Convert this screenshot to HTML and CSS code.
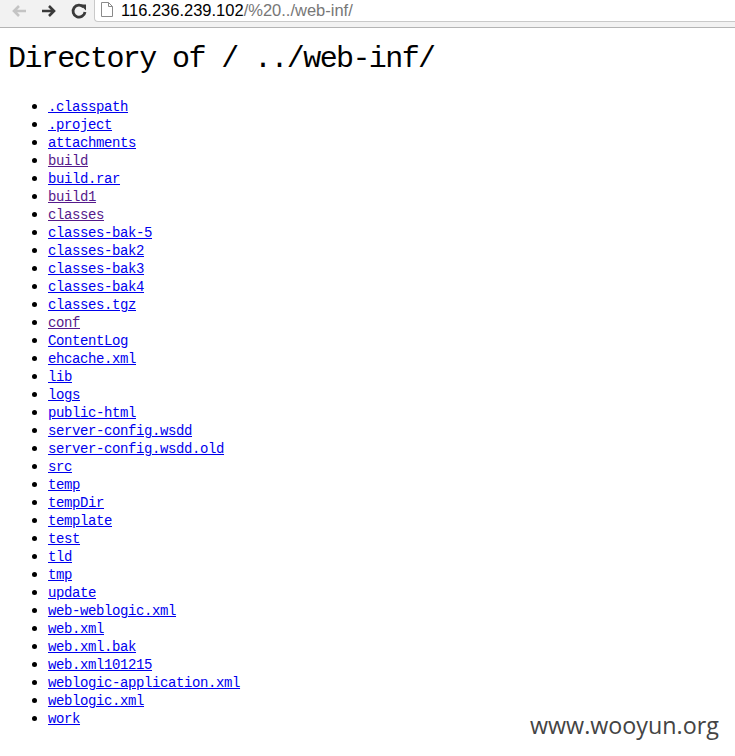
FILE: index.html
```html
<!DOCTYPE html>
<html>
<head>
<meta charset="utf-8">
<title>Directory of / ../web-inf/</title>
<link rel="stylesheet" href="styles.css">
</head>
<body>
<div class="toolbar">
  <div class="navbtns">
    <svg class="nav disabled" width="18" height="16" viewBox="0 0 18 16"><path d="M16 8H4M9 3L4 8l5 5" fill="none" stroke="#c4c4c4" stroke-width="2.6"/></svg>
    <svg class="nav" width="18" height="16" viewBox="0 0 18 16"><path d="M2 8h12M9 3l5 5-5 5" fill="none" stroke="#3a3a3a" stroke-width="2.6"/></svg>
    <svg class="nav" width="18" height="18" viewBox="0 0 18 18"><path d="M13.6 5.2A6 6 0 1 0 15 10" fill="none" stroke="#3a3a3a" stroke-width="2.8"/><path d="M10 2.5h6v6z" fill="#3a3a3a"/></svg>
  </div>
  <div class="omnibox">
    <svg class="pageicon" width="12" height="15" viewBox="0 0 12 15"><path d="M0.5 0.5h7l4 4v10h-11z M7.5 0.5v4h4" fill="#fff" stroke="#8a8a8a" stroke-width="1"/></svg>
    <span class="host">116.236.239.102</span><span class="path">/%20../web-inf/</span>
  </div>
</div>
<div class="page">
  <h1 class="title">Directory of / ../web-inf/</h1>
  <ul class="listing">
    <li><a href="#">.classpath</a></li>
    <li><a href="#">.project</a></li>
    <li><a href="#">attachments</a></li>
    <li><a class="visited" href="#">build</a></li>
    <li><a href="#">build.rar</a></li>
    <li><a class="visited" href="#">build1</a></li>
    <li><a class="visited" href="#">classes</a></li>
    <li><a href="#">classes-bak-5</a></li>
    <li><a href="#">classes-bak2</a></li>
    <li><a href="#">classes-bak3</a></li>
    <li><a href="#">classes-bak4</a></li>
    <li><a href="#">classes.tgz</a></li>
    <li><a class="visited" href="#">conf</a></li>
    <li><a href="#">ContentLog</a></li>
    <li><a href="#">ehcache.xml</a></li>
    <li><a href="#">lib</a></li>
    <li><a href="#">logs</a></li>
    <li><a href="#">public-html</a></li>
    <li><a href="#">server-config.wsdd</a></li>
    <li><a href="#">server-config.wsdd.old</a></li>
    <li><a href="#">src</a></li>
    <li><a href="#">temp</a></li>
    <li><a href="#">tempDir</a></li>
    <li><a href="#">template</a></li>
    <li><a href="#">test</a></li>
    <li><a href="#">tld</a></li>
    <li><a href="#">tmp</a></li>
    <li><a href="#">update</a></li>
    <li><a href="#">web-weblogic.xml</a></li>
    <li><a href="#">web.xml</a></li>
    <li><a href="#">web.xml.bak</a></li>
    <li><a href="#">web.xml101215</a></li>
    <li><a href="#">weblogic-application.xml</a></li>
    <li><a href="#">weblogic.xml</a></li>
    <li><a href="#">work</a></li>
  </ul>
</div>
<div class="watermark">www.wooyun.org</div>
</body>
</html>
```
FILE: styles.css
```css
html, body {
  margin: 0;
  padding: 0;
  background: #fff;
}
body {
  position: relative;
  width: 735px;
  height: 756px;
  overflow: hidden;
}
.toolbar {
  background: #f2f2f2;
  border-bottom: 1px solid #b4b4b4;
  display: flex;
  align-items: flex-start;
  box-sizing: border-box;
  height: 28px;
}
.navbtns {
  display: flex;
  align-items: center;
  gap: 12px;
  padding-left: 10px;
  height: 22px;
  width: 84px;
}
.nav {
  display: block;
}
.omnibox {
  flex: 1;
  margin-top: -2px;
  padding-top: 2px;
  background: #fff;
  border: 1px solid #c9c9c9;
  border-top: none;
  border-right: none;
  border-bottom-left-radius: 4px;
  box-sizing: border-box;
  height: 24px;
  display: flex;
  align-items: center;
  padding-left: 6px;
  font-family: "Liberation Sans", Arial, sans-serif;
  font-size: 16.5px;
}
.pageicon {
  margin-right: 8px;
  margin-top: -2px;
}
.host {
  color: #000;
}
.path {
  color: #777;
}
.page {
  padding: 0 8px;
}
.title {
  margin: 14px 0 0;
  font-family: "Liberation Mono", "Courier New", monospace;
  font-weight: normal;
  font-size: 30px;
  letter-spacing: -1.6px;
  line-height: 34px;
  color: #000;
}
.listing {
  margin: 22px 0 0;
  padding-left: 40px;
  font-family: "Liberation Mono", "Courier New", monospace;
  font-size: 14px;
  letter-spacing: -0.4px;
  line-height: 18px;
}
.listing li::marker {
  font-size: 17px;
}
.listing a {
  color: #0000ee;
  text-decoration: underline;
}
.listing a.visited {
  color: #551a8b;
}
.watermark {
  position: absolute;
  left: 530px;
  top: 709px;
  font-family: "Open Sans", "DejaVu Sans", sans-serif;
  font-size: 23.3px;
  color: #444;
}
```
